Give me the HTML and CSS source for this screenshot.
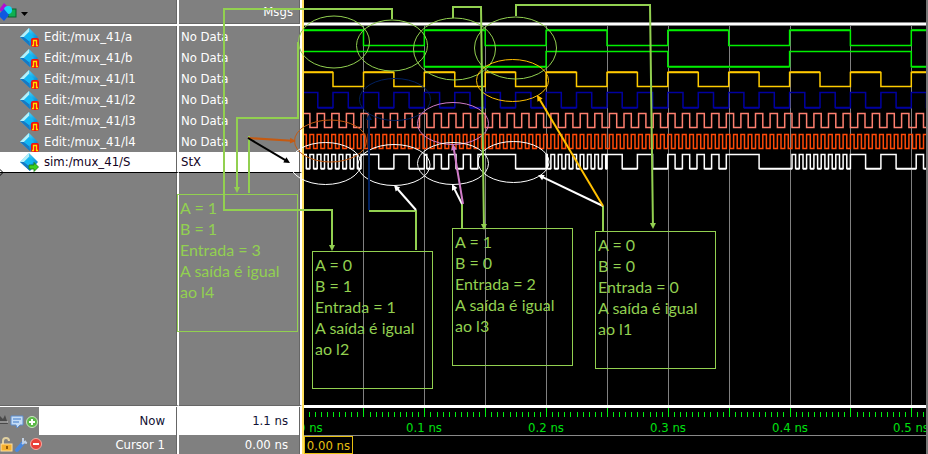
FILE: index.html
```
<!DOCTYPE html>
<html lang="pt">
<head>
<meta charset="utf-8">
<title>Wave - mux_41</title>
<link rel="stylesheet" href="styles.css">
</head>
<body>
<svg class="defs" aria-hidden="true">
  <defs>
    <linearGradient id="gem" x1="0" y1="0" x2="1" y2="1">
      <stop offset="0" stop-color="#8fe6fa"/><stop offset=".5" stop-color="#1cb4ee"/><stop offset="1" stop-color="#0b5fb4"/>
    </linearGradient>
    <symbol id="diamond" viewBox="0 0 20 20">
      <path d="M9 1 18 10 10 19 0 10Z" fill="url(#gem)"/>
      <path d="M9 1 0 10 4 10 9 5Z" fill="#b4f0fa"/>
      <path d="M0 10 10 19 9 14 4 10Z" fill="#1679c4"/>
      <path d="M9 5 14 10 9 14 4 10Z" fill="#12b8f4"/>
    </symbol>
    <symbol id="edit" viewBox="0 0 20 20">
      <use href="#diamond" width="20" height="20"/>
      <rect x="11" y="11" width="8" height="9" rx="2" fill="#f01010"/>
      <path d="M12 18.500H13.500V13.500H16.500V18.500H18" fill="none" stroke="#ffe000" stroke-width="1.300"/>
    </symbol>
    <symbol id="sim" viewBox="0 0 20 20">
      <use href="#diamond" width="20" height="20"/>
      <path d="M9 13H14V10.500L18.500 15 14 19.500V17H9Z" fill="#3ed020" stroke="#187810" stroke-width=".8"/>
    </symbol>
  </defs>
</svg>
<main class="wave-window">
  <table class="signals">
    <colgroup><col class="col-name"><col class="col-value"></colgroup>
    <thead>
      <tr>
        <th scope="col">
          <button class="tool" type="button" aria-label="Objects">
            <svg width="28" height="22" viewBox="0 0 28 22">
              <path d="M-1 9 4 2 9 7 4 12Z" fill="#b010d0"/>
              <rect x="8" y="8" width="8" height="8" fill="#10b050" stroke="#086030"/>
              <circle cx="8" cy="9" r="4" fill="#18d8f8"/>
              <path d="M-2 14 4 8 9 14 4 20Z" fill="#1058e0"/>
              <path d="M21 11H28L24.500 15Z" fill="#000"/>
            </svg>
          </button>
        </th>
        <th scope="col" class="msgs">Msgs</th>
      </tr>
    </thead>
    <tbody>
      <tr><td><svg class="icon"><use href="#edit"/></svg>Edit:/mux_41/a</td><td>No Data</td></tr>
      <tr><td><svg class="icon"><use href="#edit"/></svg>Edit:/mux_41/b</td><td>No Data</td></tr>
      <tr><td><svg class="icon"><use href="#edit"/></svg>Edit:/mux_41/l1</td><td>No Data</td></tr>
      <tr><td><svg class="icon"><use href="#edit"/></svg>Edit:/mux_41/l2</td><td>No Data</td></tr>
      <tr><td><svg class="icon"><use href="#edit"/></svg>Edit:/mux_41/l3</td><td>No Data</td></tr>
      <tr><td><svg class="icon"><use href="#edit"/></svg>Edit:/mux_41/l4</td><td>No Data</td></tr>
      <tr class="selected"><td><svg class="icon"><use href="#sim"/></svg>sim:/mux_41/S</td><td>StX</td></tr>
      <tr class="filler"><td></td><td></td></tr>
    </tbody>
    <tfoot>
      <tr class="now">
        <td><div class="foot">
          <svg class="foot-icons" width="39" height="28" viewBox="0 0 39 28">
            <path d="M0 9 3 12 5 8 8 17H0Z" fill="#4a4a4a"/><path d="M0 15H8" stroke="#d8d8d8"/>
            <path d="M11 9H23V18H20L17 21 16 18H11Z" fill="#c4dcf6" stroke="#5c8ccc"/>
            <path d="M13 12H21M13 15H19" stroke="#3c78c8"/>
            <circle cx="32" cy="15" r="5.500" fill="#5cb848" stroke="#c8e8c0"/>
            <path d="M29 15H35M32 12V18" stroke="#fff" stroke-width="2"/>
          </svg>
          <span>Now</span></div></td>
        <td class="num">1.1 ns</td>
      </tr>
      <tr class="cursor">
        <td><div class="foot">
          <svg class="foot-icons" width="44" height="19" viewBox="0 0 44 19">
            <path d="M3 9V6A3 3 0 0 1 9 6" fill="none" stroke="#e0d0a0" stroke-width="2"/>
            <rect x="1" y="9" width="11" height="7" fill="#f4b030" stroke="#ffe0a0"/><path d="M7 11V14" stroke="#905808" stroke-width="2"/>
            <path d="M17 15 23 8" stroke="#4888e0" stroke-width="4" stroke-linecap="round"/>
            <path d="M22 9 26 6M23 3 23 7 27 8" fill="none" stroke="#c0d0e4" stroke-width="2"/>
            <circle cx="36" cy="9" r="5.500" fill="#e84038" stroke="#f8a8a0"/><path d="M33 9H39" stroke="#fff" stroke-width="2"/>
          </svg>
          <span>Cursor 1</span></div></td>
        <td class="num">0.00 ns</td>
      </tr>
    </tfoot>
  </table>

  <section class="wave">
    <div class="wave-head"></div>
    <svg class="traces" id="traces"></svg>
    <svg class="ruler" id="ruler"></svg>
    <div class="cursor-row"><span class="cursor-time">0.00 ns</span></div>
  </section>

  <div class="notes">
    <svg class="note-lines">
      <path class="black" d="M-3 172.500 0 169.500 3 172.500 0 175.500Z"/>
      <g class="note-ellipses">
        <ellipse class="green" cx="334" cy="42" rx="35.500" ry="26"/>
        <ellipse class="green" cx="392" cy="45.500" rx="35.500" ry="25.500"/>
        <ellipse class="green" cx="454.500" cy="49" rx="41" ry="31"/>
        <ellipse class="green" cx="515.500" cy="48" rx="41" ry="31"/>
        <ellipse class="gold" cx="512.500" cy="80.500" rx="36" ry="21"/>
        <ellipse class="navy" cx="395" cy="99.500" rx="35.500" ry="21"/>
        <ellipse class="pink" cx="453" cy="123.500" rx="35.500" ry="21"/>
        <ellipse class="rust" cx="330.500" cy="141" rx="36" ry="21"/>
        <ellipse class="white" cx="325.500" cy="163.500" rx="35.500" ry="21"/>
        <ellipse class="white" cx="394" cy="165" rx="36" ry="20.500"/>
        <ellipse class="white" cx="453" cy="163.500" rx="35.500" ry="21"/>
        <ellipse class="white" cx="513.500" cy="162" rx="35.500" ry="20.500"/>
      </g>
      <g id="arrows"></g>
    </svg>
    <p class="note note-3">A = 1<br>B = 1<br>Entrada = 3<br>A saída é igual<br>ao l4</p>
    <p class="note note-1">A = 0<br>B = 1<br>Entrada = 1<br>A saída é igual<br>ao l2</p>
    <p class="note note-2">A = 1<br>B = 0<br>Entrada = 2<br>A saída é igual<br>ao l3</p>
    <p class="note note-0">A = 0<br>B = 0<br>Entrada = 0<br>A saída é igual<br>ao l1</p>
  </div>
</main>
<script src="wave.js"></script>
</body>
</html>
```
FILE: styles.css
```
* { box-sizing: border-box; }
body {
  margin: 0;
  background: #808080;
  color: #fff;
  font: 13px/18px "DejaVu Sans Condensed", "DejaVu Sans", sans-serif;
}
.defs { position: absolute; width: 0; height: 0; }
.wave-window { position: relative; display: flex; height: 100vh; overflow: hidden; }

.signals {
  flex: none;
  width: 302px;
  height: 100%;
  table-layout: fixed;
  border-collapse: separate;
  border-spacing: 0;
  background: #808080;
}
.col-name { width: 179px; }
.col-value { width: 123px; }
.signals th, .signals td {
  height: 21px;
  padding: 0 0 0 2px;
  font-weight: normal;
  text-align: left;
  vertical-align: middle;
  white-space: nowrap;
  border-right: 2px solid #fff;
  box-shadow: inset -1px 0 #666;
}
.signals th {
  height: 26px;
  padding: 0;
  border-bottom: 2px solid #fff;
  box-shadow: inset -1px -1px #666;
}
.signals th.msgs { padding-right: 7px; text-align: right; }
.signals tbody td:first-child { padding-left: 20px; }
.tool { display: block; padding: 0; border: 0; background: none; }
.tool svg { display: block; }
.icon { width: 20px; height: 20px; margin-right: 4px; vertical-align: middle; }
.signals .selected td { background: #fff; color: #102; border-bottom: 1px solid #000; }
.signals .filler td { height: auto; border-bottom: 1px solid #666; }
.signals .now td { height: 29px; padding: 0; background: #fff; color: #113; border-top: 1px solid #fff; }
.signals .cursor td { height: 19px; padding: 0; }
.signals tfoot .num { padding-right: 12px; text-align: right; }
.foot { display: flex; align-items: center; justify-content: space-between; padding-right: 12px; }
.foot-icons { display: block; }
.now .foot-icons { background: #808080; }

.wave {
  flex: 1;
  min-width: 0;
  display: flex;
  flex-direction: column;
  background: #000;
  border-left: 2px solid #ffe060;
  border-right: 2px solid #777;
}
.wave-head { height: 26px; border-bottom: 1px solid #888; background: linear-gradient(#000 22px, #888 22px, #888 23px, #fff 23px); }
.traces { display: block; width: 100%; flex: 1; min-height: 0; }
.ruler {
  display: block;
  width: 100%;
  height: 31px;
  border-top: 3px solid #fff;
  border-bottom: 1px solid #888;
}
.ruler text { fill: #00e010; text-anchor: middle; }
.ruler .origin { text-anchor: start; }
.cursor-row { height: 18px; }
.cursor-time { display: block; width: 49px; height: 18px; border: 1px solid #e8c010; color: #e8c010; text-align: center; line-height: 18px; }

.notes { position: absolute; inset: 0; pointer-events: none; }
.note-lines { display: block; width: 100%; height: 100%; fill: none; }
.green { stroke: #92d050; }
.gold { stroke: #ffc000; }
.navy { stroke: #00205f; }
.pink { stroke: #d07cc8; }
.rust { stroke: #c55a11; }
.white { stroke: #fff; }
.black { stroke: #000; }
.note {
  position: absolute;
  width: 121px;
  height: 138px;
  margin: 0;
  padding: 2px;
  border: 1px solid #92d050;
  color: #92d050;
  font: 16px/21px Lato, sans-serif;
  white-space: nowrap;
}
.note-3 { left: 177px; top: 194px; }
.note-1 { left: 312px; top: 251px; }
.note-2 { left: 452px; top: 228px; }
.note-0 { left: 595px; top: 231px; }
```
FILE: wave.js
```
const NS = "http://www.w3.org/2000/svg";
const PX_PER_PS = 60.87 / 50;
const ORIGIN = -1.4;
const END_PS = 515;
const x = ps => ORIGIN + ps * PX_PER_PS;

function add(parent, tag, attrs, text) {
  const el = document.createElementNS(NS, tag);
  for (const k in attrs) el.setAttribute(k, attrs[k]);
  if (text) el.textContent = text;
  parent.appendChild(el);
}

const clock = half => t => Math.floor(t / half + 1e-9) % 2 === 0;
const a = clock(50), b = clock(100), l1 = clock(25), l2 = clock(12.5), l3 = clock(6), l4 = clock(3);
const s = t => a(t) ? (b(t) ? l4(t) : l3(t)) : (b(t) ? l2(t) : l1(t));

const signals = [
  { f: a, hi: 4.5, lo: 19.5, color: "#00f000", width: 1.5, thick: "hi", dim: "#00b400" },
  { f: b, hi: 25.5, lo: 40.5, color: "#00f000", width: 1.5, thick: "lo", dim: "#00a800" },
  { f: l1, hi: 46.5, lo: 60.5, color: "#ffcc00", width: 1.5, thick: "hi", dim: "#c89600" },
  { f: l2, hi: 66.5, lo: 81.5, color: "#0000a0", width: 1.5, thick: "lo", dim: "#000070" },
  { f: l3, hi: 87.5, lo: 101.5, color: "#ff8070", width: 1.5 },
  { f: l4, hi: 108.5, lo: 122.5, color: "#ff4a08", width: 1.5 },
  { f: s, hi: 128.5, lo: 142.5, color: "#ffffff", width: 1.5, thick: "lo", dim: "#b0b0b0" }
];

const traces = document.getElementById("traces");
for (let ps = 50; ps < END_PS; ps += 50) {
  add(traces, "rect", { x: Math.round(x(ps)), y: 0, width: 1, height: "100%", fill: "#808080" });
}
for (const g of signals) {
  let level = g.f(0), d = `M0 ${level ? g.hi : g.lo}`, thick = "", from = 0;
  const close = end => {
    if (g.thick === (level ? "hi" : "lo")) {
      const y = g[g.thick] + (level ? -0.5 : 0.5);
      thick += `M${from} ${y}H${end}`;
    }
  };
  for (let t = 0.5; t <= END_PS; t += 0.5) {
    const next = g.f(t);
    if (next !== level) {
      const px = x(t);
      close(px);
      level = next;
      from = px;
      d += `H${px.toFixed(1)}V${level ? g.hi : g.lo}`;
    }
  }
  close(x(END_PS));
  d += `H${x(END_PS)}`;
  add(traces, "path", { d: thick, fill: "none", stroke: g.dim || "none", "stroke-width": 2 });
  add(traces, "path", { d, fill: "none", stroke: g.color, "stroke-width": g.width });
}

const ruler = document.getElementById("ruler");
for (let ps = 5; ps < END_PS; ps += 5) {
  const major = ps % 50 === 0;
  add(ruler, "rect", { x: Math.round(x(ps)), y: major ? 0 : 4, width: 1, height: major ? 9 : 5, fill: "#00f010" });
}
add(ruler, "text", { class: "origin", x: -6, y: 24 }, "0 ns");
for (let ps = 100; ps <= 500; ps += 100) {
  add(ruler, "text", { x: Math.round(x(ps)), y: 24 }, `${ps / 1000} ns`);
}

/* Connectors: class, whether the last point carries an arrow head, points. */
const arrows = [
  ["navy", true, [[369, 210], [369, 114]]],
  ["green", true, [[392, 19], [392, 9], [224, 9], [224, 210], [332, 210], [332, 251]]],
  ["green", true, [[453, 18], [453, 7], [481, 7], [484, 230]]],
  ["green", true, [[516, 16], [516, 5], [650, 5], [653, 229]]],
  ["green", true, [[298, 42], [298, 118], [237, 118], [237, 193]]],
  ["green", false, [[249, 136], [249, 193]]],
  ["green", false, [[369, 211], [416, 211], [416, 250]]],
  ["green", false, [[462, 204], [462, 228]]],
  ["green", false, [[603, 206], [603, 231]]],
  ["rust", true, [[248, 138], [296, 141]]],
  ["black", true, [[248, 138], [290, 163]]],
  ["white", true, [[416, 210], [394, 185]]],
  ["white", true, [[462, 204], [452, 184]]],
  ["pink", true, [[463, 204], [453, 144]]],
  ["white", true, [[603, 206], [538, 175]]],
  ["gold", true, [[603, 206], [537, 95]]]
];
const layer = document.getElementById("arrows");
for (const [cls, head, pts] of arrows) {
  const [px, py] = pts[pts.length - 2];
  const [tx, ty] = pts[pts.length - 1];
  const len = Math.hypot(tx - px, ty - py);
  const ux = (tx - px) / len, uy = (ty - py) / len;
  const line = head ? [...pts.slice(0, -1), [tx - ux * 4, ty - uy * 4]] : pts;
  add(layer, "polyline", { class: cls, points: line.join(" "), "stroke-width": 2 });
  if (head) {
    const bx = tx - ux * 6, by = ty - uy * 6;
    const tip = [[tx, ty], [bx - uy * 3, by + ux * 3], [bx + uy * 3, by - ux * 3]];
    const color = getComputedStyle(layer.lastChild).stroke;
    add(layer, "polygon", { points: tip.join(" "), fill: color });
  }
}
```
